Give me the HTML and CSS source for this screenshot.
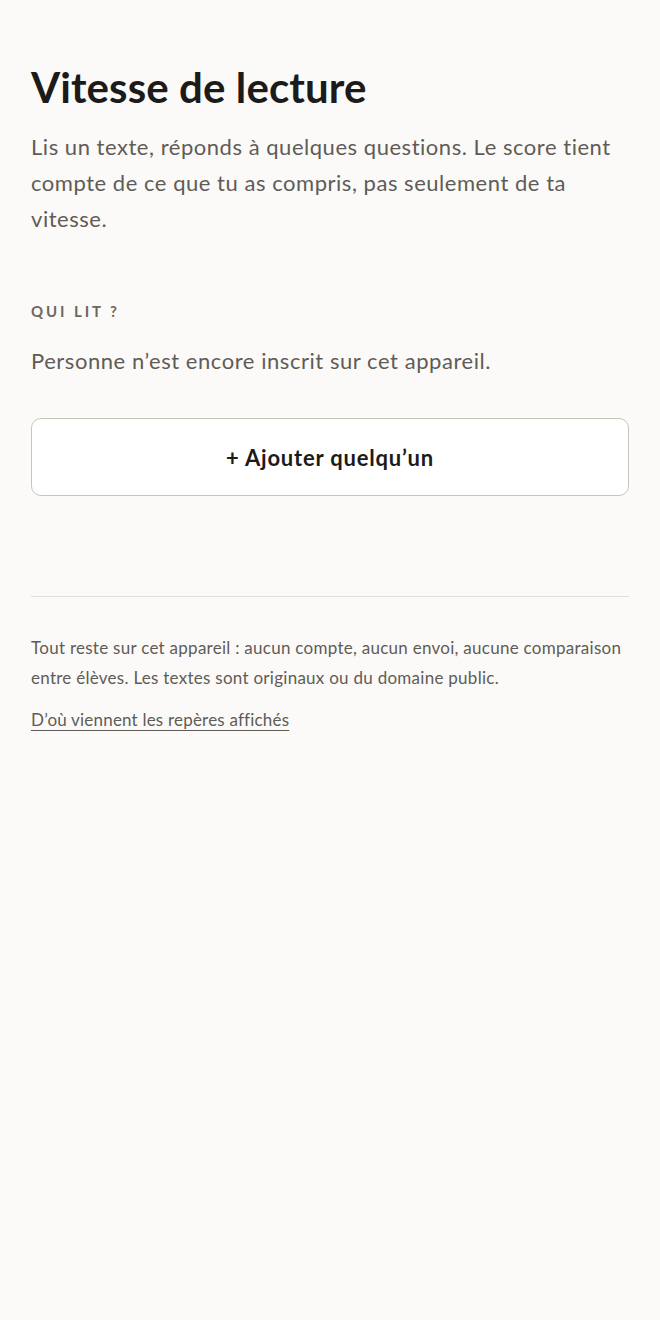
FILE: index.html
```html
<!DOCTYPE html>
<html lang="fr">
<head>
<meta charset="utf-8">
<title>Vitesse de lecture</title>
<link rel="stylesheet" href="styles.css">
</head>
<body>
<main class="page">
  <header class="intro">
    <h1 class="title">Vitesse de lecture</h1>
    <p class="lead">Lis un texte, réponds à quelques questions. Le score tient compte de ce que tu as compris, pas seulement de ta vitesse.</p>
  </header>
  <section class="readers">
    <h2 class="label">Qui lit ?</h2>
    <p class="empty">Personne n’est encore inscrit sur cet appareil.</p>
    <button class="add-btn" type="button">+ Ajouter quelqu’un</button>
  </section>
  <footer class="foot">
    <p class="note">Tout reste sur cet appareil : aucun compte, aucun envoi, aucune comparaison entre élèves. Les textes sont originaux ou du domaine public.</p>
    <a class="link" href="#">D’où viennent les repères affichés</a>
  </footer>
</main>
</body>
</html>
```
FILE: styles.css
```css
* { box-sizing: border-box; }
html, body {
  margin: 0;
  padding: 0;
  background: #fbfaf8;
}
body {
  font-family: Lato, "Liberation Sans", sans-serif;
  color: #1c1b19;
}
.page {
  padding: 64px 31px 40px;
  display: flex;
  flex-direction: column;
}
.title {
  margin: 0;
  font-size: 42px;
  line-height: 46px;
  font-weight: 700;
  letter-spacing: 0.1px;
  color: #1c1b19;
}
.lead {
  margin: 19px 0 0;
  font-size: 22px;
  line-height: 36px;
  letter-spacing: 0.53px;
  color: #5f5c57;
}
.readers {
  margin-top: 64px;
  display: flex;
  flex-direction: column;
}
.label {
  margin: 0;
  font-size: 15px;
  line-height: 20px;
  font-weight: 700;
  letter-spacing: 2.9px;
  text-transform: uppercase;
  color: #6b6862;
}
.empty {
  margin: 22px 0 0;
  font-size: 22px;
  line-height: 36px;
  letter-spacing: 0.55px;
  color: #5f5c57;
}
.add-btn {
  margin-top: 39px;
  height: 78px;
  width: 100%;
  background: #ffffff;
  border: 1px solid #c9c5bd;
  border-radius: 10px;
  font-family: inherit;
  font-size: 22px;
  font-weight: 700;
  letter-spacing: 0.8px;
  color: #1c1b19;
}
.foot {
  margin-top: 100px;
  border-top: 1px solid #e2dfda;
  padding-top: 36px;
  display: flex;
  flex-direction: column;
  align-items: flex-start;
}
.note {
  margin: 0;
  font-size: 17px;
  line-height: 30px;
  letter-spacing: 0.27px;
  color: #5f5c57;
}
.link {
  margin-top: 12px;
  font-size: 17px;
  line-height: 30px;
  letter-spacing: 0.2px;
  color: #5f5c57;
  text-decoration: underline;
  text-underline-offset: 4px;
}
```
